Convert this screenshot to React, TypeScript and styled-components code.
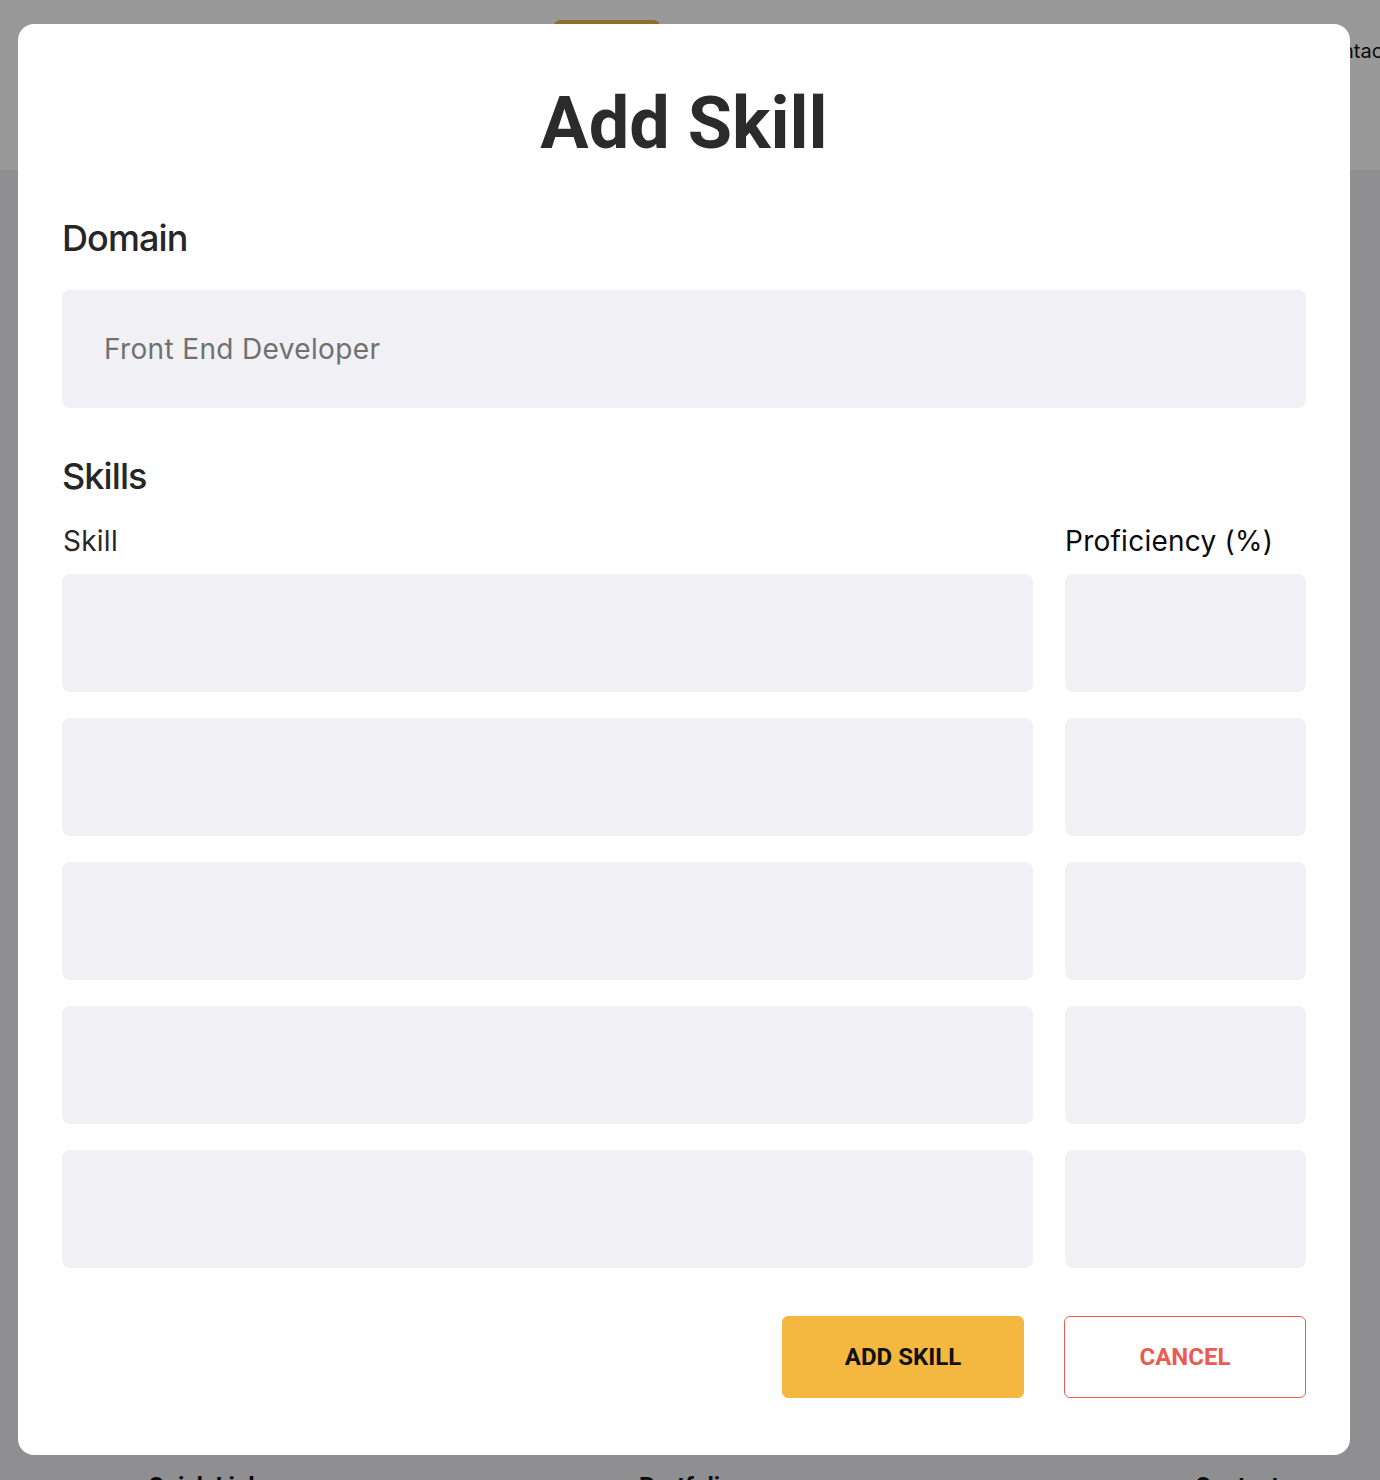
import React from "react";
import styled, { createGlobalStyle } from "styled-components";

const GlobalStyle = createGlobalStyle`
  html, body { margin: 0; padding: 0; }
  body {
    background: #efeff4;
    font-family: Inter, "Noto Sans", sans-serif;
    overflow: hidden;
  }
  * { box-sizing: border-box; }
`;

const Page = styled.div`
  width: 1380px;
  height: 1480px;
  overflow: hidden;
`;

const Header = styled.header`
  height: 170px;
  background: #ffffff;
  display: flex;
  align-items: flex-start;
  padding: 20px 0 0 40px;
  white-space: nowrap;
`;

const Brand = styled.div`
  flex: 0 0 513px;
  font-family: Roboto, sans-serif;
  font-weight: 700;
  font-size: 28px;
  line-height: 56px;
  color: #222;
`;

const Nav = styled.nav`
  flex: 0 0 auto;
  display: flex;
  align-items: center;
  gap: 117.5px;
  height: 62px;
`;

const NavPill = styled.a`
  flex: 0 0 108px;
  height: 62px;
  border-radius: 8px;
  background: #f4b73f;
  display: flex;
  align-items: center;
  justify-content: center;
  font-family: Inter, sans-serif;
  font-size: 20px;
  color: #111;
`;

const NavLink = styled.a`
  flex: 0 0 auto;
  font-family: Inter, sans-serif;
  font-size: 20px;
  color: #111;
`;

const Main = styled.main`
  height: 1266px;
`;

const Footer = styled.footer`
  display: grid;
  grid-template-columns: 491px 556px 1fr;
  padding: 38px 0 0 148px;
`;

const FooterHeading = styled.h4`
  margin: 0;
  font-family: Roboto, sans-serif;
  font-weight: 700;
  font-size: 24px;
  line-height: 1;
  color: #111;
`;

const Overlay = styled.div`
  position: fixed;
  inset: 0;
  background: rgba(0, 0, 0, 0.4);
  display: flex;
  align-items: center;
  justify-content: center;
  padding: 0 12px 1px 0;
`;

const Modal = styled.div`
  width: 1332px;
  background: #ffffff;
  border-radius: 16px;
  padding: 64px 44px 57px;
  display: flex;
  flex-direction: column;
`;

const Title = styled.h2`
  margin: 0 0 60px;
  font-family: Roboto, "Liberation Sans", sans-serif;
  font-weight: 700;
  font-size: 72px;
  line-height: 72px;
  text-align: center;
  color: #2b2b2b;
`;

const SectionLabel = styled.h3<{ $gap: number }>`
  margin: 0 0 ${(p) => p.$gap}px;
  font-family: Inter, sans-serif;
  font-weight: 500;
  font-size: 36px;
  line-height: 36px;
  letter-spacing: -0.9px;
  color: #262626;
`;

const Field = styled.div`
  height: 118px;
  border-radius: 8px;
  background: #f0f0f5;
  display: flex;
  align-items: center;
  padding-left: 42px;
  font-family: Inter, sans-serif;
  font-size: 28px;
  letter-spacing: 0.35px;
  color: #707070;
`;

const DomainField = styled(Field)`
  margin-bottom: 50px;
`;

const SkillGrid = styled.div`
  display: grid;
  grid-template-columns: 1fr 241px;
  column-gap: 32px;
  row-gap: 26px;
`;

const ColumnHead = styled.div<{ $dark?: boolean }>`
  padding-left: ${(p) => (p.$dark ? "0" : "1px")};
  font-family: Inter, sans-serif;
  font-size: 28px;
  line-height: 28px;
  letter-spacing: 0.25px;
  color: ${(p) => (p.$dark ? "#0a0a0a" : "#262626")};
  margin-bottom: -7px;
`;

const Actions = styled.div`
  display: flex;
  justify-content: flex-end;
  gap: 40px;
  margin-top: 48px;
`;

const Button = styled.button<{ $variant: "primary" | "outline" }>`
  width: 242px;
  height: 82px;
  border-radius: 6px;
  font-family: Roboto, sans-serif;
  font-weight: 700;
  font-size: 24px;
  text-transform: uppercase;
  cursor: pointer;
  background: ${(p) => (p.$variant === "primary" ? "#f4b740" : "#ffffff")};
  color: ${(p) => (p.$variant === "primary" ? "#111111" : "#ec5b52")};
  border: ${(p) =>
    p.$variant === "primary" ? "1px solid #f4b740" : "1px solid #ec5b52"};
`;

export default function App() {
  const rows = [0, 1, 2, 3, 4];
  return (
    <>
      <GlobalStyle />
      <Page>
        <Header>
          <Brand>Portfolio</Brand>
          <Nav>
            <NavPill>Home</NavPill>
            <NavLink>About</NavLink>
            <NavLink>Skills</NavLink>
            <NavLink>Portfolio</NavLink>
            <NavLink>Contact</NavLink>
          </Nav>
        </Header>
        <Main />
        <Footer>
          <FooterHeading>Quick Links</FooterHeading>
          <FooterHeading>Portfolio</FooterHeading>
          <FooterHeading>Contact</FooterHeading>
        </Footer>
      </Page>
      <Overlay>
        <Modal>
          <Title>Add Skill</Title>
          <SectionLabel $gap={34}>Domain</SectionLabel>
          <DomainField>Front End Developer</DomainField>
          <SectionLabel $gap={33}>Skills</SectionLabel>
          <SkillGrid>
            <ColumnHead>Skill</ColumnHead>
            <ColumnHead $dark>Proficiency (%)</ColumnHead>
            {rows.map((r) => (
              <React.Fragment key={r}>
                <Field />
                <Field />
              </React.Fragment>
            ))}
          </SkillGrid>
          <Actions>
            <Button $variant="primary">Add Skill</Button>
            <Button $variant="outline">Cancel</Button>
          </Actions>
        </Modal>
      </Overlay>
    </>
  );
}
